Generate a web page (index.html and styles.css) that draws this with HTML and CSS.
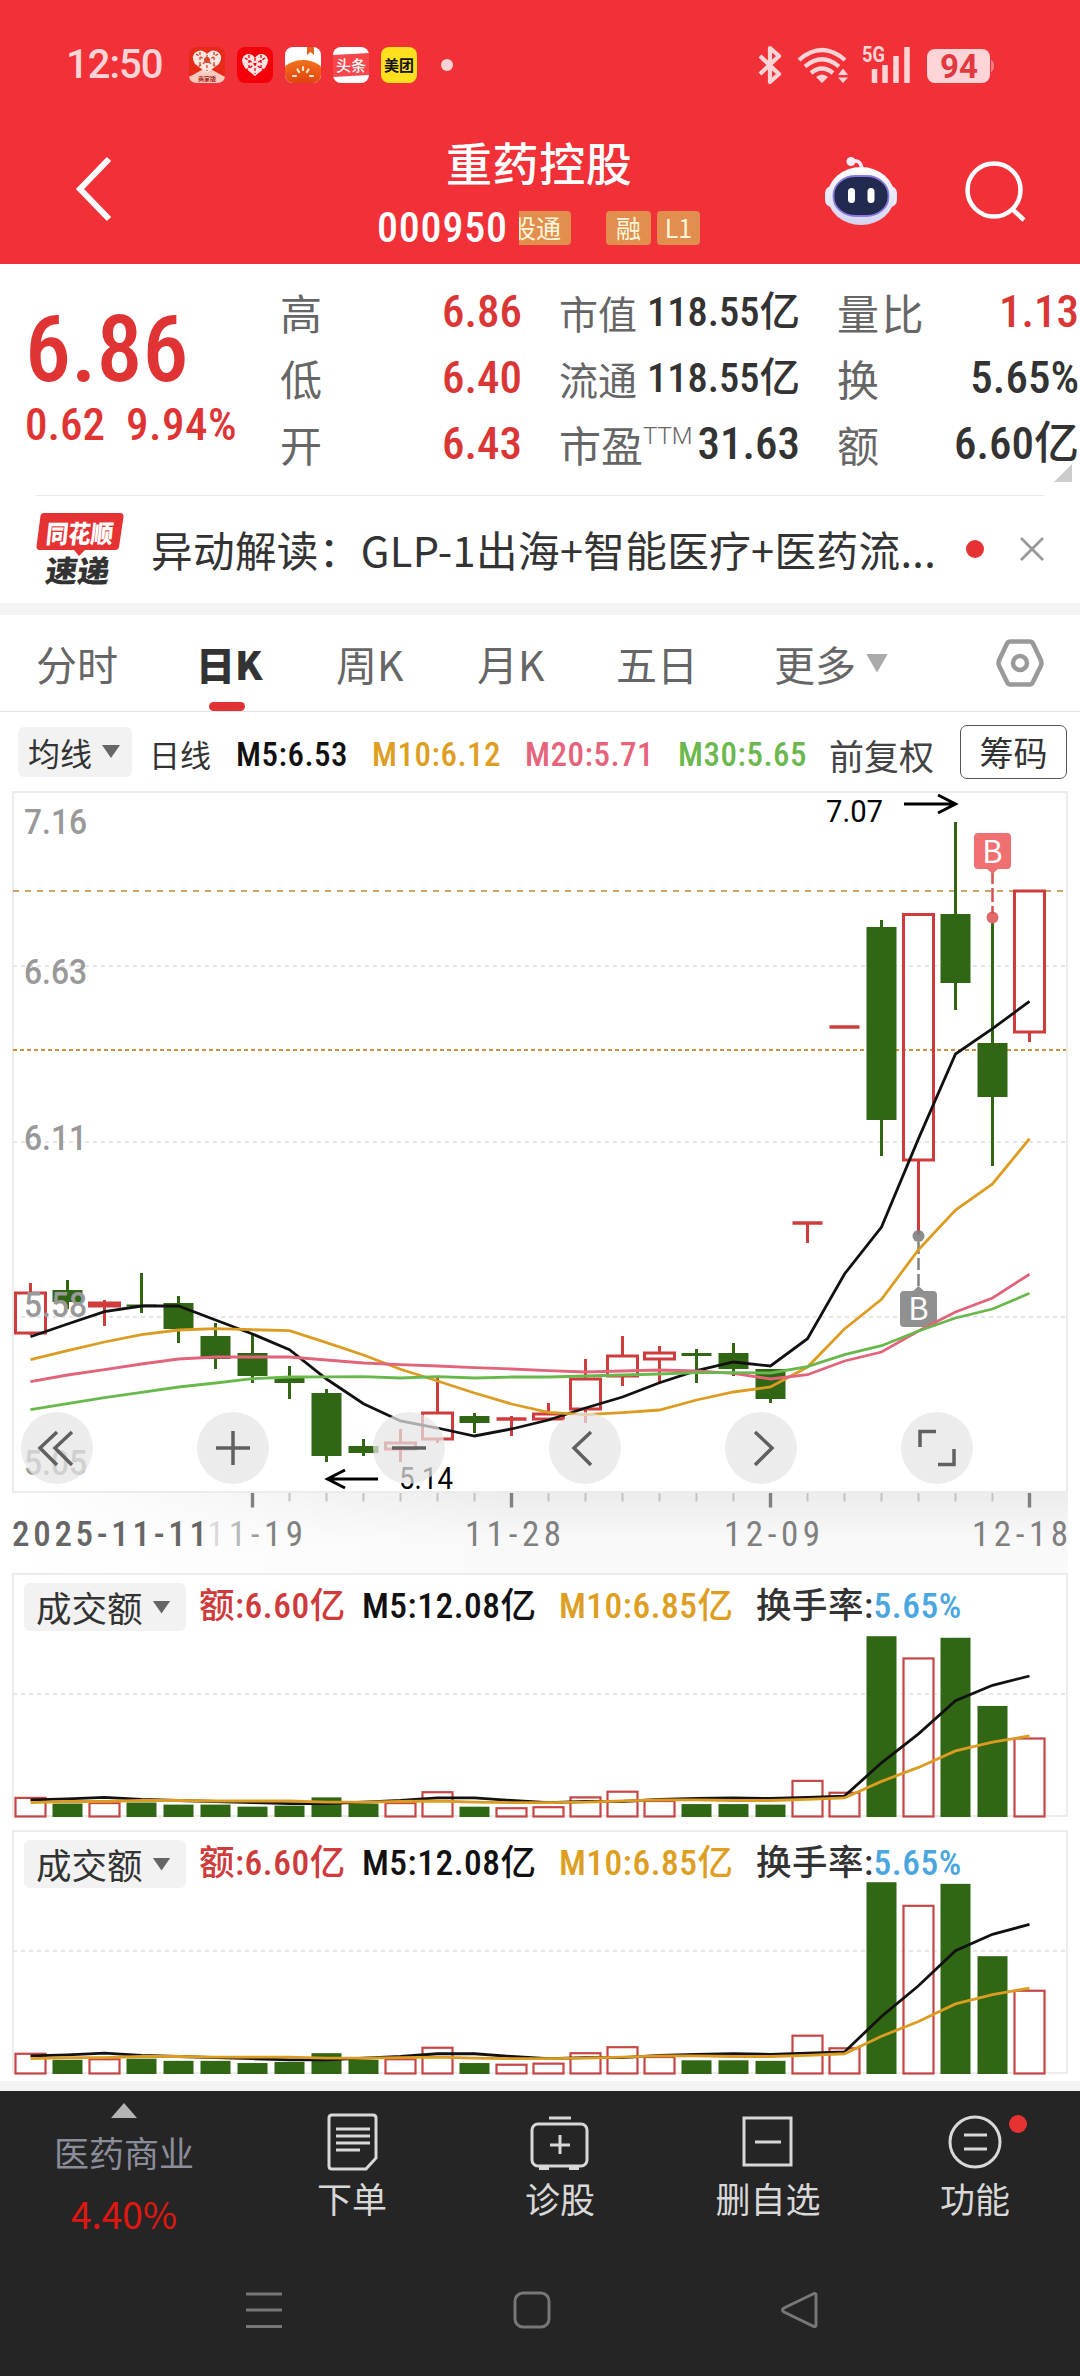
FILE: index.html
```html
<!DOCTYPE html>
<html lang="zh-CN">
<head>
<meta charset="utf-8">
<title>重药控股 000950</title>
<link rel="stylesheet" href="styles.css">
</head>
<body>
<div class="screen">
  <header class="header">
    <div class="status">
      <span class="clock">12:50</span>
      <div class="apps">
        <svg class="app" viewBox="0 0 36 36"><rect width="36" height="36" rx="8" fill="#e62a18"/><path d="M0 30L18 20L36 30V28Q36 36 28 36H8Q0 36 0 28Z" fill="#fbc9bd"/><path d="M18 26L6 17Q1 9 7 5Q13 1 18 7Q23 1 29 5Q35 9 30 17Z" fill="#fde7e0"/><path d="M7 7L29 21M29 7L7 21M18 8V24M11 5V20M25 5V20" stroke="#d8452f" stroke-width="1.3" stroke-dasharray="3 2"/><circle cx="18" cy="13" r="3" fill="#d8452f"/><text x="18" y="34" text-anchor="middle" class="app-tiny">商家版</text></svg>
        <svg class="app" viewBox="0 0 36 36"><rect width="36" height="36" rx="8" fill="#f5000a"/><path d="M18 29L8 21Q2 12 8 8Q14 5 18 11Q22 5 28 8Q34 12 28 21Z" fill="#ffe3e3"/><path d="M8 11L27 23M28 11L9 23M18 11V27M12 8V23M24 8V23" stroke="#f5000a" stroke-width="1.3" stroke-dasharray="3 2"/></svg>
        <svg class="app" viewBox="0 0 36 36"><defs><radialGradient id="tomato" cx=".5" cy="1" r="1"><stop offset="0" stop-color="#d42208"/><stop offset="1" stop-color="#f2711c"/></radialGradient><clipPath id="round"><rect width="36" height="36" rx="8"/></clipPath></defs><g clip-path="url(#round)"><rect width="36" height="36" fill="#fff"/><path d="M22 0h7v8l-3.500-3l-3.500 3z" fill="#e2621f"/><ellipse cx="18" cy="32" rx="24" ry="19" fill="url(#tomato)"/><path d="M18 20v3M12.500 22.500l1.500 2.500M23.500 22.500l-1.500 2.500M8 29h3M28 29h-3" stroke="#ffe9d2" stroke-width="2.200" stroke-linecap="round"/></g></svg>
        <svg class="app" viewBox="0 0 36 36"><rect width="36" height="36" rx="8" fill="#fff"/><path d="M0 8L36 6V28L0 30Z" fill="#f8474c"/><text x="18" y="24" text-anchor="middle" class="app-text app-text-light">头条</text></svg>
        <svg class="app" viewBox="0 0 36 36"><rect width="36" height="36" rx="8" fill="#ffe01e"/><text x="18" y="24" text-anchor="middle" class="app-text">美团</text></svg>
      </div>
      <span class="status-dot"></span>
      <svg class="signals" viewBox="756 40 244 50">
        <g fill="none" stroke="#ffd4d6" stroke-width="4.200">
          <path d="M760 56L779 74L770 82V48L779 56L760 74" stroke-linejoin="round"/>
          <path d="M799 60Q822 40 845 60M805 66.500Q822 52 839 66.500M811 73Q822 64 833 73"/>
        </g>
        <path d="M816 77Q822 72 828 77L822 83ZM838 75L843 68.500L848 75ZM838 77.500L843 83L848 77.500Z" fill="#ffd4d6"/>
        <text x="862" y="62" class="five-g" textLength="23" lengthAdjust="spacingAndGlyphs">5G</text>
        <path d="M874.500 69V83M885 65V83M896 56V83M907 47V83" stroke="#ffd4d6" stroke-width="5.500"/>
        <rect x="927" y="49" width="63" height="34" rx="8" fill="#ffd4d6"/><path d="M991 60q3 1 3 6t-3 6z" fill="#f77f83"/>
        <text x="940" y="77.500" class="battery" textLength="38" lengthAdjust="spacingAndGlyphs">94</text>
      </svg>
    </div>
    <div class="titlebar">
      <svg class="back" viewBox="0 0 40 70"><path d="M34 5L5 35L34 65" fill="none" stroke="#fff" stroke-width="6"/></svg>
      <div class="title">
        <h1>重药控股</h1>
        <div class="sub"><span class="code num">000950</span><span class="tag tag-cut"><i>股通</i></span><span class="tag tag-rong">融</span><span class="tag tag-l1">L1</span></div>
      </div>
      <svg class="robot" viewBox="0 0 76 72"><defs><linearGradient id="shell" x2="0" y2="1"><stop offset="0" stop-color="#fff"/><stop offset="1" stop-color="#d3d3f2"/></linearGradient></defs><path d="M28 8Q38 4 39 16" fill="none" stroke="#f5e5f5" stroke-width="3.500"/><circle cx="28" cy="7.500" r="4.500" fill="#f3eef8"/><rect x="2" y="32" width="72" height="21" rx="7" fill="#e9e9fa"/><ellipse cx="38" cy="42" rx="33.500" ry="29" fill="url(#shell)"/><rect x="10.500" y="22" width="55" height="40" rx="22" ry="19" fill="#222a50" stroke="#8a7be0" stroke-width="1.800"/><rect x="25" y="34" width="7" height="15" rx="3.500" fill="#fff"/><rect x="44.500" y="34" width="7" height="15" rx="3.500" fill="#fff"/></svg>
      <svg class="search" viewBox="0 0 64 64"><circle cx="30" cy="31" r="26.500" fill="none" stroke="#fff" stroke-width="4.500"/><path d="M48 50L60 61" stroke="#fff" stroke-width="4.500"/></svg>
    </div>
  </header>

  <section class="quote">
    <div class="price red"><b class="num">6.86</b><div class="change"><span class="num">0.62</span><span class="num">9.94%</span></div></div>
    <dl class="col col-a">
      <dt>高</dt><dd class="red num">6.86</dd><dt>低</dt><dd class="red num">6.40</dd><dt>开</dt><dd class="red num">6.43</dd>
    </dl>
    <dl class="col col-b">
      <dt class="dense">市值</dt><dd class="num dense-num">118.55亿</dd><dt class="dense">流通</dt><dd class="num dense-num">118.55亿</dd><dt>市盈<sup>TTM</sup></dt><dd class="num">31.63</dd>
    </dl>
    <dl class="col col-c">
      <dt>量比</dt><dd class="red num">1.13</dd><dt>换</dt><dd class="num">5.65%</dd><dt>额</dt><dd class="num">6.60亿</dd>
    </dl>
    <i class="expand"></i>
  </section>

  <section class="news">
    <svg class="news-logo" viewBox="0 0 90 74"><path d="M8 1H84Q88 1 87.500 5L83 35Q82.500 38 79 38H49L43 44L38 38H4Q0 38 .5 34L4.500 4Q5 1 8 1Z" fill="#e63232"/><text x="43" y="31" text-anchor="middle" class="logo-top" transform="skewX(-6) translate(3 0)" textLength="67" lengthAdjust="spacingAndGlyphs">同花顺</text><text x="43" y="70" text-anchor="middle" class="logo-bottom" transform="skewX(-8) translate(7 0)" textLength="64" lengthAdjust="spacingAndGlyphs">速递</text></svg>
    <p>异动解读：GLP-1出海+智能医疗+医药流...</p>
    <i class="news-dot"></i>
    <svg class="close" viewBox="0 0 24 24"><path d="M1 1L23 23M23 1L1 23" stroke="#999" stroke-width="2.800"/></svg>
  </section>

  <nav class="tabs">
    <span>分时</span><span class="active">日K</span><span>周K</span><span>月K</span><span>五日</span><span class="more">更多<i class="tri tri-gray"></i></span>
    <svg class="gear" viewBox="0 0 48 48"><path d="M14.500 2.500H33.500Q36 2.500 37 4.500L45 21.500Q46 24 45 26.500L37 43Q36 45.500 33.500 45.500H14.500Q12 45.500 11 43L3 26.500Q2 24 3 21.500L11 4.500Q12 2.500 14.500 2.500Z" fill="none" stroke="#999" stroke-width="4.500"/><circle cx="24" cy="24" r="7" fill="none" stroke="#999" stroke-width="4.500"/></svg>
  </nav>

  <div class="ma">
    <button class="chip">均线<i class="tri"></i></button><span class="ma-day">日线</span>
    <span class="ma-num num m5">M5:6.53</span><span class="ma-num num m10">M10:6.12</span><span class="ma-num num m20">M20:5.71</span><span class="ma-num num m30">M30:5.65</span>
    <span class="adjust">前复权</span><button class="chips">筹码</button>
  </div>

  <section class="kline">
    <svg id="kline" viewBox="0 791 1080 782"></svg>
    <div class="controls">
      <button><svg viewBox="0 0 72 72"><path d="M36 20L19 36L36 53M51 20L34 36L51 53"/></svg></button>
      <button><svg viewBox="0 0 72 72"><path d="M19 36H53M36 19V53"/></svg></button>
      <button><svg viewBox="0 0 72 72"><path d="M19 36H53"/></svg></button>
      <button><svg viewBox="0 0 72 72"><path d="M42 20L25 36L42 53"/></svg></button>
      <button><svg viewBox="0 0 72 72"><path d="M30 20L47 36L30 53"/></svg></button>
      <button><svg viewBox="0 0 72 72"><path d="M19 35V19.500H35M53 37V52.500H37"/></svg></button>
    </div>
  </section>

  <section class="volume"><svg class="vol-chart" data-scale="1.033" viewBox="0 0 1080 251"></svg>
    <div class="legend"><button class="chip">成交额<i class="tri"></i></button><span class="num v1">额:6.60亿</span><span class="num v2">M5:12.08亿</span><span class="num v3">M10:6.85亿</span><span class="num v4">换手率:<em>5.65%</em></span></div>
  </section>
  <section class="volume"><svg class="vol-chart" data-scale="1.096" viewBox="0 0 1080 251"></svg>
    <div class="legend"><button class="chip">成交额<i class="tri"></i></button><span class="num v1">额:6.60亿</span><span class="num v2">M5:12.08亿</span><span class="num v3">M10:6.85亿</span><span class="num v4">换手率:<em>5.65%</em></span></div>
  </section>

  <footer class="footer">
    <nav class="actions">
      <div class="sector"><i class="up"></i><span>医药商业</span><strong>4.40%</strong></div>
      <div class="action"><svg viewBox="0 0 60 60"><path d="M10 3H51Q54 3 54 6V46L44 57H10Q7 57 7 54V6Q7 3 10 3ZM14 17H48M14 24H48M14 31H48M14 38H38"/></svg><span>下单</span></div>
      <div class="action"><svg viewBox="0 0 60 60"><rect x="2" y="12" width="55" height="42" rx="6"/><path d="M19 6H41M30 23V42M20 33H40M9 56.500H19M39 56.500H49"/></svg><span>诊股</span></div>
      <div class="action"><svg viewBox="0 0 60 60"><rect x="6" y="6" width="47" height="47"/><path d="M17 30H43"/></svg><span>删自选</span></div>
      <div class="action"><svg viewBox="0 0 60 60"><circle cx="30" cy="30" r="25"/><path d="M19 23H42M19 37H42"/></svg><i class="badge"></i><span>功能</span></div>
    </nav>
    <div class="sysnav">
      <svg viewBox="0 0 40 40"><path d="M2 4H38M2 20H38M2 36.500H38"/></svg>
      <svg viewBox="0 0 40 40"><rect x="3" y="3" width="34" height="34" rx="8"/></svg>
      <svg viewBox="0 0 40 40"><path d="M34 3.500L4 18Q1 20 4 22L34 36.500Q36 37 36 35V5Q36 3 34 3.500Z"/></svg>
    </div>
  </footer>
</div>
<script src="chart.js"></script>
</body>
</html>
```
FILE: styles.css
```css
* { box-sizing: border-box; margin: 0; padding: 0; }
body { background: #fff; font-family: "Noto Sans CJK SC", sans-serif; color: #333; }
i, em { font-style: normal; }
button { border: 0; background: none; font: inherit; color: inherit; }
.screen { width: 1080px; height: 2376px; overflow: hidden; display: flex; flex-direction: column; }
.num { font-family: Roboto, "Noto Sans CJK SC", sans-serif; font-stretch: 85%; font-weight: 500; white-space: nowrap; }
.red { color: #e03434; }

/* header */
.header { height: 264px; flex: none; background: #f23038; color: #fff; }
.status { height: 112px; display: flex; align-items: center; padding: 18px 80px 0 66px; }
.clock { width: 123px; font: 500 40px/50px Roboto, sans-serif; color: #ffd4d6; letter-spacing: -1px; }
.apps { display: flex; gap: 12px; }
.app { width: 36px; height: 36px; display: block; }
.app-tiny { font: 700 6px "Noto Sans CJK SC", sans-serif; fill: #9d2a1a; }
.app-text { font: 700 15px "Noto Sans CJK SC", sans-serif; fill: #111; }
.app-text-light { fill: #fff; font-weight: 500; }
.status-dot { width: 12px; height: 12px; border-radius: 50%; background: #ffd4d6; margin-left: 24px; }
.signals { width: 244px; height: 50px; margin-left: auto; }
.five-g { font: 700 22px Roboto, sans-serif; fill: #ffd4d6; }
.battery { font: 700 33px Roboto, sans-serif; fill: #e23940; }
.titlebar { height: 152px; display: grid; grid-template-columns: 76px 301px 386px 62px 76px 62px 64px; }
.back { grid-column: 1 / 3; margin: 42px 0 0 75px; width: 40px; height: 70px; }
.title { grid-column: 3; }
.title h1 { font-size: 46px; font-weight: 500; line-height: 66px; margin-top: 16px; padding-left: 69px; letter-spacing: .6px; }
.sub { display: flex; margin-top: 13px; height: 42px; align-items: center; }
.code { width: 142px; font-size: 42px; line-height: 42px; letter-spacing: .8px; }
.tag { height: 34px; border-radius: 4px; background: #e28e4e; color: #fff6dc; font-size: 25px; line-height: 33px; text-align: center; white-space: nowrap; }
.tag-cut { width: 52px; overflow: hidden; display: flex; justify-content: flex-end; padding-right: 10px; border-radius: 0 4px 4px 0; }
.tag-rong { width: 45px; margin-left: 35px; }
.tag-l1 { width: 43px; margin-left: 6px; }
.robot { grid-column: 5; width: 76px; height: 72px; margin-top: 42px; margin-left: -2px; }
.search { grid-column: 7; width: 64px; height: 64px; margin-top: 47px; margin-left: 1px; }

/* quote */
.quote { height: 231px; flex: none; display: flex; padding-top: 15px; position: relative; }
.price { width: 280px; padding-left: 25px; padding-top: 21px; }
.price b { display: block; font-size: 92px; line-height: 100px; font-weight: 500; font-stretch: 81%; }
.change { display: flex; font-size: 45px; line-height: 60px; margin-top: -5px; }
.change span:first-child { width: 101px; }
.change span:last-child { letter-spacing: .5px; }
.col { display: grid; grid-template-columns: 0 1fr; grid-auto-rows: 66px; font-size: 42px; line-height: 66px; }
.col dt { color: #666; white-space: nowrap; }
.col dd { text-align: right; font-size: 45px; color: #333; }
.col dd.red { color: #db3636; }
.col .dense { font-size: 39px; }
.col .dense-num { font-size: 40.5px; }
.col-a { width: 242px; }
.col-b { width: 241px; margin-left: 37px; }
.col-c { width: 242px; margin-left: 37px; }
.col-c dt { letter-spacing: 2.5px; }
.col sup { font-family: Roboto, sans-serif; font-weight: 300; font-size: 24px; line-height: 0; vertical-align: 18px; }
.expand { position: absolute; left: 1054px; top: 200px; width: 18px; height: 18px; background: #ccc; clip-path: polygon(100% 0, 100% 100%, 0 100%); }

/* news */
.news { height: 120px; flex: none; display: flex; align-items: center; padding: 0 36px; border-bottom: 12px solid #f4f4f4; position: relative; background: linear-gradient(#e9e9e9, #e9e9e9) 36px 0 / 1008px 1px no-repeat; }
.news-logo { width: 90px; height: 74px; overflow: visible; }
.logo-top { font: 900 25px "Noto Sans CJK SC", sans-serif; fill: #fff; }
.logo-bottom { font: 900 30px "Noto Sans CJK SC", sans-serif; fill: #333; }
.news p { width: 800px; margin-left: 25px; font-size: 41.6px; line-height: 60px; letter-spacing: .35px; white-space: nowrap; }
.news-dot { width: 18px; height: 18px; border-radius: 50%; background: #e63232; margin-left: 15px; }
.close { width: 24px; height: 24px; margin-left: 36px; }

/* tabs */
.tabs { height: 97px; flex: none; border-bottom: 1px solid #e4e4e4; display: grid; grid-template-columns: 161px 139px 141px 139px 158px 222px 48px; padding-left: 36px; align-items: center; font-size: 41px; color: #666; }
.tabs span { display: flex; align-items: center; height: 96px; position: relative; }
.tabs .active { color: #333; font-weight: 900; font-size: 39px; margin-left: -1px; }
.tabs .active::after { content: ""; position: absolute; left: 13px; bottom: 0; width: 36px; height: 9px; border-radius: 5px; background: #e03434; }
.tri { width: 18px; height: 13px; background: #666; clip-path: polygon(0 0, 100% 0, 50% 100%); }
.tri-gray { width: 22px; height: 19px; background: #aaa; margin-left: 10px; }
.gear { width: 48px; height: 48px; }

/* moving averages */
.ma { height: 79px; flex: none; display: grid; grid-template-columns: 131px 87px 136px 153px 153px 151px 131px 107px; padding-left: 18px; align-items: center; }
.chip { display: flex; align-items: center; border-radius: 6px; background: #f2f2f2; color: #333; }
.ma .chip { width: 114px; height: 50px; padding-left: 10px; font-size: 32px; gap: 10px; }
.ma-day { font-size: 31px; padding-top: 3px; }
.ma-num { font-size: 33px; padding-top: 5px; letter-spacing: .5px; }
.m5 { color: #111; }
.m10, .v3 { color: #dd9e22; }
.m20 { color: #e5647b; }
.m30 { color: #6cb84e; }
.adjust { font-size: 35px; padding-top: 6px; color: #444; }
.chips { height: 54px; border: 1px solid #555; border-radius: 7px; font-size: 34px; line-height: 50px; }

/* main chart */
.kline { height: 782px; flex: none; position: relative; }
.kline > svg { display: block; width: 1080px; height: 782px; }
.axis { font: 500 35px Roboto, sans-serif; fill: #999; }
.mark { font: 400 31px Roboto, sans-serif; fill: #000; }
.date { font: 400 35px Roboto, sans-serif; font-stretch: 80%; fill: #808080; }
.date-first { fill: #666; font-weight: 500; }
.flag { font: 400 31px "Noto Sans CJK SC", sans-serif; fill: #fff; }
.controls { position: absolute; left: 21px; top: 621px; display: flex; gap: 104px; }
.controls button { width: 72px; height: 72px; border-radius: 50%; background: rgba(229, 229, 229, .73); }
.controls svg { display: block; width: 72px; height: 72px; fill: none; stroke: #606060; stroke-width: 3.5; }

/* turnover charts */
.volume { height: 257px; flex: none; position: relative; }
.volume + .volume { height: 251px; }
.vol-chart { display: block; width: 1080px; height: 251px; }
.legend { position: absolute; left: 24px; top: 10px; display: grid; grid-template-columns: 175px 163px 197px 197px auto; align-items: center; font-size: 35.5px; line-height: 48px; letter-spacing: .5px; color: #333; }
.legend .chip { width: 162px; height: 48px; padding-left: 12px; gap: 10px; letter-spacing: 0; line-height: 46px; }
.legend span { margin-top: -3px; }
.v1 { color: #cf3b3b; }
.v2 { color: #111; }
.v4 em { color: #4aa6de; }

/* footer */
.footer { flex: 1; background: #252525; border-top: 10px solid #f4f4f4; }
.actions { height: 154px; display: grid; grid-template-columns: 248px 208px 208px 208px 206px; }
.sector { display: flex; flex-direction: column; align-items: center; padding-top: 12px; color: #8b8d9b; font-size: 35px; line-height: 52px; }
.up { width: 26px; height: 15px; background: #b4b4b4; clip-path: polygon(50% 0, 100% 100%, 0 100%); margin-bottom: 8px; }
.sector strong { font-weight: 400; font-size: 37px; line-height: 56px; color: #e0170f; margin-top: 7px; }
.action { display: flex; flex-direction: column; align-items: center; padding-top: 21px; color: #d8d8d8; font-size: 35px; line-height: 50px; position: relative; }
.action svg { width: 60px; height: 60px; margin-bottom: 1px; fill: none; stroke: #d8d8d8; stroke-width: 3; }
.badge { position: absolute; left: 137px; top: 24px; width: 18px; height: 18px; border-radius: 50%; background: #e63232; }
.sysnav { display: flex; gap: 228px; padding: 45px 0 0 244px; }
.sysnav svg { width: 40px; height: 40px; fill: none; stroke: #777; stroke-width: 3; }
```
FILE: chart.js
```js
// Pixel geometry shared by all panels: bar centres are 37px apart.
const X = i => 30.5 + i * 37;
const GREEN = '#316714', RED = '#d03c3c';
const rect = (x, y, w, h, a) => `<rect x="${x}" y="${y}" width="${w}" height="${h}" ${a}/>`;
const seg = (x1, y1, x2, y2, a) => `<path d="M${x1} ${y1}L${x2} ${y2}" ${a}/>`;
const poly = (ys, color) => `<polyline points="${ys.map((y, i) => X(i) + ',' + y).join(' ')}" fill="none" stroke="${color}" stroke-width="2.8"/>`;
const label = (x, y, cls, len, s, extra = '') => `<text x="${x}" y="${y}" class="${cls}" textLength="${len}" lengthAdjust="spacingAndGlyphs" ${extra}>${s}</text>`;
const date = (x, len, s, cls = '', extra = '') => `<text x="${x}" y="1546" class="date ${cls}" textLength="${len}" ${extra}>${s}</text>`;

// [direction, high, body top, body bottom, low]
const candles = [
  ['r',1283,1293,1333,1335],['g',1280,1290,1302,1309],['r',1300,1303,1306,1326],['g',1273,1304.5,1306.5,1313],
  ['g',1296,1303,1329,1343],['g',1323,1336,1359,1369],['g',1335,1353,1376,1383],['g',1366,1378,1383,1399],
  ['g',1389,1393,1456,1462],['g',1439,1446,1453,1456],['r',1429,1443,1449,1462],['r',1378,1413,1439,1443],
  ['g',1413,1416,1423,1433],['r',1416,1419,1419,1436],['r',1403,1414,1419,1420],['r',1359,1379,1409,1423],
  ['r',1336,1356,1376,1386],['r',1346,1353,1359,1383],['g',1349,1353,1356,1383],['g',1343,1353,1369,1376],
  ['g',1369,1369,1399,1403],['r',1223,1223,1223,1243],['r',1027,1027,1027,1027],['g',920,927,1120,1156],
  ['r',914,914.5,1160,1235],['g',822,914,983,1010],['g',917,1043,1097,1166],['r',890,891,1032,1042]
];
const ma5 = [1336.7,1324,1311.7,1306,1306,1320,1334,1349.7,1379,1403.7,1421,1428,1436,1429,1420,1408,1397,1382.7,1370.7,1362,1366,1338.7,1274,1227,1138.6,1054,1028.7,1001.4];
const ma10 = [1359.7,1350.7,1342,1334.7,1330,1328.7,1329.7,1330.7,1342.7,1355,1369.3,1381,1393,1404,1412.3,1414.7,1412.7,1410,1400,1392,1387,1367,1329,1299.3,1249.7,1210,1184,1138.6];
const ma20 = [1381.7,1375,1369.7,1364,1359,1357,1357,1357,1360,1363,1364.7,1366,1367.7,1369,1370.7,1372,1371,1370,1371,1373.3,1379,1374.7,1361,1352,1331,1312,1298,1274.3];
const ma30 = [1409.7,1403.7,1397.7,1392.3,1387,1383,1378.7,1377,1376.8,1376.7,1378,1376.7,1378,1377,1377,1376,1375,1374,1372.7,1372.7,1373,1366.7,1354.7,1345.7,1331,1318,1309,1293.3];

function drawKline() {
  let s = '<defs><linearGradient id="fade" x2="0" y2="1"><stop offset="0" stop-color="#ececec"/><stop offset=".6" stop-color="#f9f9f9"/><stop offset="1" stop-color="#fafafa"/></linearGradient>' +
    '<linearGradient id="side"><stop offset="0" stop-color="#fff"/><stop offset="1" stop-color="#fff" stop-opacity="0"/></linearGradient>' +
    '<linearGradient id="ink" gradientUnits="userSpaceOnUse" x1="207" x2="275" y1="0" y2="0"><stop offset="0" stop-color="#e8e8e8"/><stop offset="1" stop-color="#808080"/></linearGradient></defs>';
  s += rect(13, 1493, 1055, 80, 'fill="url(#fade)"') + rect(13, 1493, 500, 80, 'fill="url(#side)"');
  s += rect(13, 792, 1054, 700, 'fill="none" stroke="#ececec" stroke-width="2"');
  for (const y of [966, 1142, 1317]) s += seg(13, y, 1066, y, 'stroke="#dedede" stroke-width="1.3" stroke-dasharray="4 4"');
  s += seg(13, 891, 1066, 891, 'stroke="#c9a36a" stroke-width="1.8" stroke-dasharray="6 6"');
  s += seg(13, 1050, 1066, 1050, 'stroke="#d09040" stroke-width="2" stroke-dasharray="4 3"');
  candles.forEach(([d, hi, top, bot, lo], i) => {
    const x = X(i);
    if (d === 'g') {
      s += seg(x, hi, x, lo, `stroke="${GREEN}" stroke-width="3"`) + rect(x - 15, top, 30, bot - top, `fill="${GREEN}"`);
    } else {
      s += seg(x, hi, x, top, `stroke="${RED}" stroke-width="3"`) + seg(x, bot, x, lo, `stroke="${RED}" stroke-width="3"`);
      s += top === bot ? seg(x - 15, top, x + 15, top, `stroke="${RED}" stroke-width="3.5"`)
        : rect(x - 15, top, 30, bot - top, `fill="none" stroke="${RED}" stroke-width="3"`);
    }
  });
  // trade flags
  s += '<circle cx="918.5" cy="1236" r="6" fill="#808080" opacity=".9"/><circle cx="992.500" cy="917.500" r="6" fill="#e06a6a"/>' +
    seg(992.5, 870, 992.5, 914, 'stroke="#d85050" stroke-width="2.500" stroke-dasharray="14 4"') +
    seg(918.5, 1242, 918.5, 1290, 'stroke="#808080" stroke-width="2.500" stroke-dasharray="12 4"');
  s += '<path d="M978 833h29q4 0 4 4v28q0 4-4 4h-9l-5.500 5l-5.500-5h-9q-4 0-4-4v-28q0-4 4-4z" fill="#f07072"/><text x="992.500" y="863" text-anchor="middle" class="flag">B</text>';
  s += '<path d="M904 1291h9l5.500-5l5.500 5h9q4 0 4 4v28q0 4-4 4h-29q-4 0-4-4v-28q0-4 4-4z" fill="#909090"/><text x="918.500" y="1320" text-anchor="middle" class="flag">B</text>';
  s += poly(ma5, '#111') + poly(ma10, '#dc9c22') + poly(ma20, '#e2647a') + poly(ma30, '#69b84c');
  [['7.16', 834], ['6.63', 984], ['6.11', 1150], ['5.58', 1317], ['5.05', 1475]].forEach(([t, y]) => s += label(24, y, 'axis', 63, t));
  s += label(826, 822, 'mark', 57, '7.07') + label(399, 1489, 'mark', 54, '5.14');
  s += '<path d="M904 804H955M938 795L955.500 804L938 813M378 1479H327M345 1470L327.500 1479L345 1488" fill="none" stroke="#000" stroke-width="3"/>';
  for (let i = 6; i < 28; i++) {
    const major = [6, 13, 20, 27].includes(i);
    s += seg(X(i), 1493, X(i), major ? 1507.5 : 1501.5, `stroke="${major ? '#808080' : '#c2c2c2'}" stroke-width="${major ? 3.4 : 2}"`);
  }
  s += date(12, 195, '2025-11-11', 'date-first') + date(207, 96, '11-19', '', 'style="fill:url(#ink)"') +
    date(465, 96, '11-28') + date(724, 96, '12-09') + date(972, 96, '12-18');
  document.getElementById('kline').innerHTML = s;
}

const vol = [18,13,13,14,12,12,10,11,19,13,13,23.5,10,8,9,18.5,24,15,12.5,12.5,12,34.5,23,175,153,173.5,107.5,75.5];
const v5 = [16,17,18.5,16.5,15.5,14.5,13.5,12.5,12.5,14,15.5,18,18,15.5,13.5,14.5,14.5,16.5,17.5,18,17.5,18.5,19.7,52,80,112,127,136];
const v10 = [13.5,14.5,14.5,15.5,15.5,15,15,15,14,14,14.5,15,14,13.5,13.5,14,15,16,16,15.5,15.5,16.5,18,34,47.5,63.5,72,78];

function drawVolume(svg) {
  const k = +svg.dataset.scale, base = 243.5;
  let s = rect(13, -1, 1054, 244, 'fill="none" stroke="#ececec" stroke-width="2"') + seg(12, 1, 1068, 1, 'stroke="#ececec" stroke-width="2"');
  s += seg(13, 121, 1066, 121, 'stroke="#e8e8e8" stroke-width="2" stroke-dasharray="4 4"');
  vol.forEach((v, i) => {
    const h = v * k;
    s += candles[i][0] === 'g' ? rect(X(i) - 15, base + .5 - h, 30, h, `fill="${GREEN}"`)
      : rect(X(i) - 15, base - h, 30, h, 'fill="none" stroke="#c84545" stroke-width="2.2"');
  });
  s += poly(v5.map(v => base - v * k), '#111') + poly(v10.map(v => base - v * k), '#dc9c22');
  svg.innerHTML = s;
}

drawKline();
document.querySelectorAll('.vol-chart').forEach(drawVolume);
```
